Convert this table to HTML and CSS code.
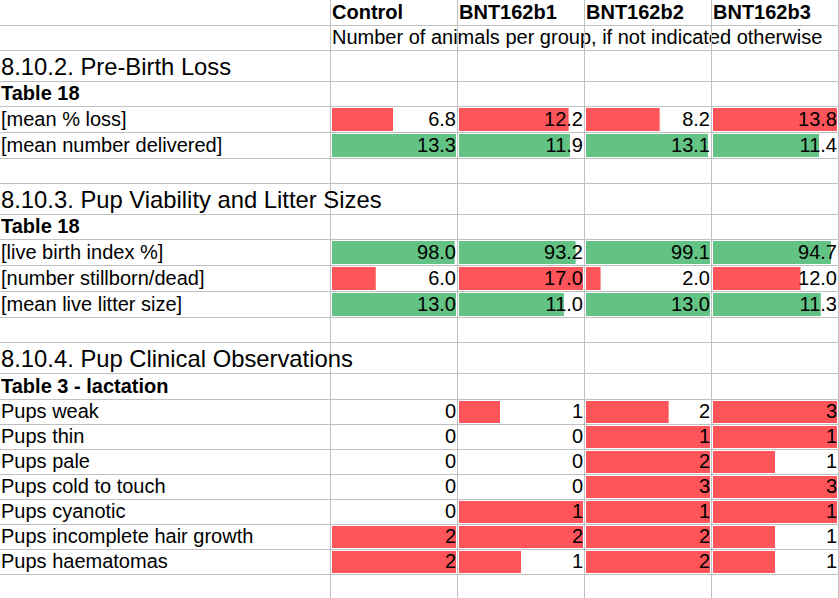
FILE: index.html
```html
<!DOCTYPE html>
<html lang="en">
<head>
<meta charset="utf-8">
<title>Pup observations</title>
<link rel="stylesheet" href="styles.css">
</head>
<body>
<div class="sheet">
  <div class="c"></div><div class="c b">Control</div><div class="c b">BNT162b1</div><div class="c b">BNT162b2</div><div class="c b">BNT162b3</div>
  <div class="c"></div><div class="c">Number of animals per group, if not indicated otherwise</div><div class="c"></div><div class="c"></div><div class="c"></div>
  <div class="c h">8.10.2. Pre-Birth Loss</div><div class="c"></div><div class="c"></div><div class="c"></div><div class="c"></div>
  <div class="c b">Table 18</div><div class="c"></div><div class="c"></div><div class="c"></div><div class="c"></div>
  <div class="c">[mean % loss]</div><div class="c n red" style="--f:.4928">6.8</div><div class="c n red" style="--f:.8841">12.2</div><div class="c n red" style="--f:.5942">8.2</div><div class="c n red" style="--f:1">13.8</div>
  <div class="c">[mean number delivered]</div><div class="c n green" style="--f:1">13.3</div><div class="c n green" style="--f:.8947">11.9</div><div class="c n green" style="--f:.985">13.1</div><div class="c n green" style="--f:.8571">11.4</div>
  <div class="c"></div><div class="c"></div><div class="c"></div><div class="c"></div><div class="c"></div>
  <div class="c h">8.10.3. Pup Viability and Litter Sizes</div><div class="c"></div><div class="c"></div><div class="c"></div><div class="c"></div>
  <div class="c b">Table 18</div><div class="c"></div><div class="c"></div><div class="c"></div><div class="c"></div>
  <div class="c">[live birth index %]</div><div class="c n green" style="--f:.9889">98.0</div><div class="c n green" style="--f:.9405">93.2</div><div class="c n green" style="--f:1">99.1</div><div class="c n green" style="--f:.9556">94.7</div>
  <div class="c">[number stillborn/dead]</div><div class="c n red" style="--f:.3529">6.0</div><div class="c n red" style="--f:1">17.0</div><div class="c n red" style="--f:.1176">2.0</div><div class="c n red" style="--f:.7059">12.0</div>
  <div class="c">[mean live litter size]</div><div class="c n green" style="--f:1">13.0</div><div class="c n green" style="--f:.8462">11.0</div><div class="c n green" style="--f:1">13.0</div><div class="c n green" style="--f:.8692">11.3</div>
  <div class="c"></div><div class="c"></div><div class="c"></div><div class="c"></div><div class="c"></div>
  <div class="c h">8.10.4. Pup Clinical Observations</div><div class="c"></div><div class="c"></div><div class="c"></div><div class="c"></div>
  <div class="c b">Table 3 - lactation</div><div class="c"></div><div class="c"></div><div class="c"></div><div class="c"></div>
  <div class="c">Pups weak</div><div class="c n">0</div><div class="c n red" style="--f:.3333">1</div><div class="c n red" style="--f:.6667">2</div><div class="c n red" style="--f:1">3</div>
  <div class="c">Pups thin</div><div class="c n">0</div><div class="c n">0</div><div class="c n red" style="--f:1">1</div><div class="c n red" style="--f:1">1</div>
  <div class="c">Pups pale</div><div class="c n">0</div><div class="c n">0</div><div class="c n red" style="--f:1">2</div><div class="c n red" style="--f:.5">1</div>
  <div class="c">Pups cold to touch</div><div class="c n">0</div><div class="c n">0</div><div class="c n red" style="--f:1">3</div><div class="c n red" style="--f:1">3</div>
  <div class="c">Pups cyanotic</div><div class="c n">0</div><div class="c n red" style="--f:1">1</div><div class="c n red" style="--f:1">1</div><div class="c n red" style="--f:1">1</div>
  <div class="c">Pups incomplete hair growth</div><div class="c n red" style="--f:1">2</div><div class="c n red" style="--f:1">2</div><div class="c n red" style="--f:1">2</div><div class="c n red" style="--f:.5">1</div>
  <div class="c">Pups haematomas</div><div class="c n red" style="--f:1">2</div><div class="c n red" style="--f:.5">1</div><div class="c n red" style="--f:1">2</div><div class="c n red" style="--f:.5">1</div>
  <div class="c"></div><div class="c"></div><div class="c"></div><div class="c"></div><div class="c"></div>
</div>
</body>
</html>
```
FILE: styles.css
```css
html, body {
  margin: 0;
  padding: 0;
  background: #ffffff;
}

body {
  font-family: "Liberation Sans", Arial, sans-serif;
  color: #000000;
  overflow: hidden;
}

.sheet {
  display: grid;
  grid-template-columns: 331px repeat(4, 127px);
  grid-template-rows: 26px 25px 31px 25px 26px 26px 25px 31px 25px 26px 26px 26px 25px 31px 26px 25px 25px 25px 25px 25px 25px 25px 25px;
  width: 839px;
}

.c {
  box-sizing: border-box;
  min-width: 0;
  display: flex;
  align-items: flex-end;
  justify-content: flex-start;
  padding: 0 1px 1px 1px;
  border-right: 1px solid #c0c0c0;
  border-bottom: 1px solid #c0c0c0;
  font-size: 20px;
  line-height: normal;
  white-space: nowrap;
  --f: 0;
}

.b {
  font-weight: bold;
}

.h {
  font-size: 23.8px;
  padding-bottom: 0;
}

.n {
  justify-content: flex-end;
}

.red,
.green {
  background-repeat: no-repeat;
  background-origin: padding-box;
  background-position: 1px 1px;
  background-size: calc((100% - 2px) * var(--f)) calc(100% - 2px);
}

.red {
  background-image: linear-gradient(#ff555a, #ff555a);
}

.green {
  background-image: linear-gradient(#63c384, #63c384);
}
```
